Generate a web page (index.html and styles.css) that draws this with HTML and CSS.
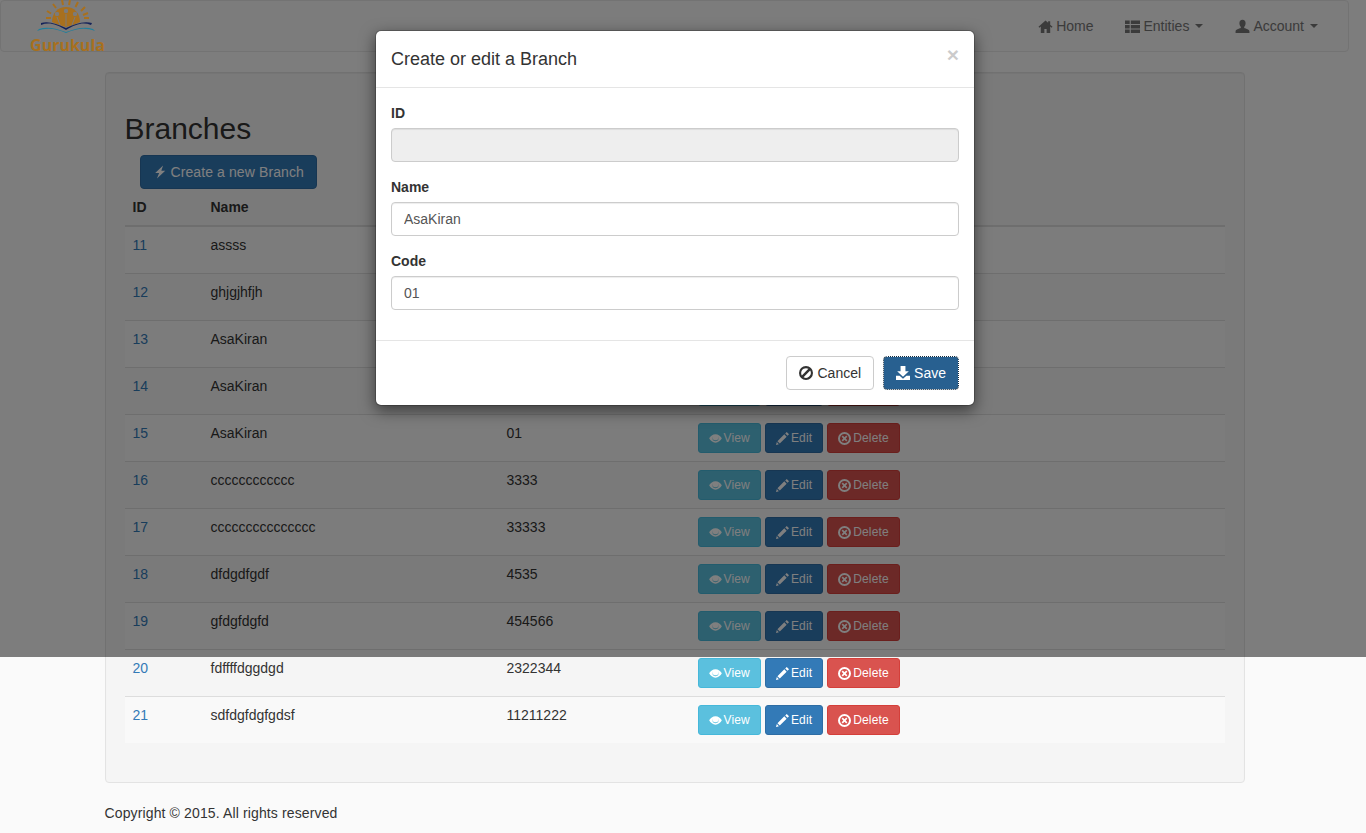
FILE: index.html
```html
<!doctype html>
<html lang="en">

<head>
    <meta charset="utf-8">
    <meta name="viewport" content="width=device-width, initial-scale=1">
    <title>Gurukula - Branches</title>
    <link rel="stylesheet" href="styles.css">
</head>

<body>
<!-- icon set -->
<svg class="icon-defs" aria-hidden="true">
    <symbol id="i-home" viewBox="0 0 16 16"><path d="M8 1.5 .5 8.3l1 1L3 8v6.8h3.8v-4.2h2.4v4.2H13V8l1.500 1.300 1-1L13 6V2.300h-2.200v1.700z"/></symbol>
    <symbol id="i-list" viewBox="0 0 16 16"><path d="M0 1.500h5v3.700H0zM6.200 1.500H16v3.700H6.200zM0 6.300h5V10H0zM6.200 6.300H16V10H6.200zM0 11.100h5v3.700H0zM6.200 11.100H16v3.700H6.200z"/></symbol>
    <symbol id="i-user" viewBox="0 0 16 16"><path d="M8 .8C5.800.8 4.700 2.400 4.700 4.500c0 1.600.6 3 1.500 3.800v1.400C4 10.500.6 11.200.6 13.300v1.700h14.800v-1.700c0-2.100-3.400-2.800-5.600-3.600V8.300c.9-.8 1.500-2.200 1.500-3.800C11.300 2.400 10.200.8 8 .8z"/></symbol>
    <symbol id="i-flash" viewBox="0 .5 16 15"><path d="M11.500.5 2.500 9H7l-2.500 6.500L14 6.500H9.500z"/></symbol>
    <symbol id="i-eye" viewBox="0 2 16 12"><path fill-rule="evenodd" d="M8 2.800C4.600 2.800 1.800 5 .2 7.800c1.600 3 4.400 5.400 7.800 5.400s6.200-2.400 7.800-5.400C14.200 5 11.400 2.800 8 2.800zM4.400 5.200a4 4 0 0 0-.2 3.400c.7 1.700 2.200 2.800 3.800 2.800s3.200-1.100 3.800-2.800a4 4 0 0 0-.2-3.400 3.600 3.600 0 0 1-.2 3.300C10.700 9.400 9.400 10 8 10s-2.700-.6-3.400-1.500a3.600 3.600 0 0 1-.2-3.300z"/></symbol>
    <symbol id="i-pencil" viewBox="0.800 0.800 14.400 14.400"><path d="M12.700.8 15.200 3.300 13.600 5 11 2.400zM10 3.400l2.600 2.600L5 13.600 2.400 11zM1.700 12l2.300 2.300-3.200 1z"/></symbol>
    <symbol id="i-remove" viewBox="0.800 0.800 14.400 14.400"><path fill-rule="evenodd" d="M8 .8a7.200 7.200 0 1 0 0 14.400A7.200 7.200 0 0 0 8 .8zm0 2.200a5 5 0 1 1 0 10A5 5 0 0 1 8 3z"/><path d="M6.100 4.800 8 6.700l1.900-1.900 1.300 1.300L9.300 8l1.900 1.900-1.300 1.300L8 9.300l-1.900 1.900-1.300-1.300L6.700 8 4.800 6.100z"/></symbol>
    <symbol id="i-ban" viewBox="0.800 0.800 14.400 14.400"><path fill-rule="evenodd" d="M8 .8a7.200 7.200 0 1 0 0 14.400A7.200 7.200 0 0 0 8 .8zm0 2.200c.9 0 1.800.3 2.500.7L3.700 10.500A5 5 0 0 1 8 3zm4.300 2.500a5 5 0 0 1-6.800 6.800z"/></symbol>
    <symbol id="i-save" viewBox="0.800 1 14.400 14.400"><path d="M5.500 1h5v5.500h3.500L8 12 2 6.500h3.500zM.8 11h3.700L8 14l3.500-3h3.700v4.300H.8z"/></symbol>
</svg>

<nav class="navbar">
    <a class="logo" href="#">
        <svg class="logo-mark" viewBox="0 0 74 34" aria-hidden="true">
            <path class="logo-sun" d="M21 22c0-9 6-15 14-15s14 6 14 15l-7 3-7 2-7-2z"/>
            <circle class="logo-cut" cx="26" cy="14" r="2.200"/>
            <circle class="logo-cut" cx="35" cy="11" r="2.200"/>
            <circle class="logo-cut" cx="44" cy="14" r="2.200"/>
            <path class="logo-line" d="M26 17l3 8M35 14v12M44 17l-3 8"/>
            <path class="logo-ray" d="M15 18h5M16 11l4 2.500M22 4l3 4M31 0l1 5M39 0l-1 5M47 2l-2.500 5M54 7l-4 4M57 13l-5 2M58 18h-5"/>
            <path class="logo-navy" d="M10 25c8-3 15-1 25 5 10-6 17-8 25-5l1-2c-9-2-17 1-26 5-9-4-17-7-25-5z"/>
            <path class="logo-teal" d="M6 31c10-4 20-2 29 2 9-4 19-6 29-2l-2-2c-9-3-18 0-27 3-9-3-18-6-27-3z"/>
        </svg>
        <span class="logo-text">Gurukula</span>
    </a>
    <ul class="nav">
        <li><a href="#"><svg class="icon"><use href="#i-home"/></svg>Home</a></li>
        <li><a href="#"><svg class="icon"><use href="#i-list"/></svg>Entities<span class="caret"></span></a></li>
        <li><a href="#"><svg class="icon"><use href="#i-user"/></svg>Account<span class="caret"></span></a></li>
    </ul>
</nav>

<div class="container">
    <div class="well">
        <h2>Branches</h2>
        <button class="btn btn-primary btn-create"><svg class="icon"><use href="#i-flash"/></svg>Create a new Branch</button>
        <table class="table">
            <colgroup>
                <col class="col-id">
                <col class="col-name">
                <col class="col-code">
                <col>
            </colgroup>
            <thead>
                <tr><th>ID</th><th>Name</th><th>Code</th><th></th></tr>
            </thead>
            <tbody>
                <tr>
                    <td><a href="#">11</a></td><td>assss</td><td>1111</td>
                    <td><div class="actions">
                        <button class="btn btn-sm btn-info"><svg class="icon"><use href="#i-eye"/></svg>View</button>
                        <button class="btn btn-sm btn-primary"><svg class="icon"><use href="#i-pencil"/></svg>Edit</button>
                        <button class="btn btn-sm btn-danger"><svg class="icon"><use href="#i-remove"/></svg>Delete</button>
                    </div></td>
                </tr>
                <tr>
                    <td><a href="#">12</a></td><td>ghjgjhfjh</td><td>2222</td>
                    <td><div class="actions">
                        <button class="btn btn-sm btn-info"><svg class="icon"><use href="#i-eye"/></svg>View</button>
                        <button class="btn btn-sm btn-primary"><svg class="icon"><use href="#i-pencil"/></svg>Edit</button>
                        <button class="btn btn-sm btn-danger"><svg class="icon"><use href="#i-remove"/></svg>Delete</button>
                    </div></td>
                </tr>
                <tr>
                    <td><a href="#">13</a></td><td>AsaKiran</td><td>01</td>
                    <td><div class="actions">
                        <button class="btn btn-sm btn-info"><svg class="icon"><use href="#i-eye"/></svg>View</button>
                        <button class="btn btn-sm btn-primary"><svg class="icon"><use href="#i-pencil"/></svg>Edit</button>
                        <button class="btn btn-sm btn-danger"><svg class="icon"><use href="#i-remove"/></svg>Delete</button>
                    </div></td>
                </tr>
                <tr>
                    <td><a href="#">14</a></td><td>AsaKiran</td><td>01</td>
                    <td><div class="actions">
                        <button class="btn btn-sm btn-info"><svg class="icon"><use href="#i-eye"/></svg>View</button>
                        <button class="btn btn-sm btn-primary"><svg class="icon"><use href="#i-pencil"/></svg>Edit</button>
                        <button class="btn btn-sm btn-danger"><svg class="icon"><use href="#i-remove"/></svg>Delete</button>
                    </div></td>
                </tr>
                <tr>
                    <td><a href="#">15</a></td><td>AsaKiran</td><td>01</td>
                    <td><div class="actions">
                        <button class="btn btn-sm btn-info"><svg class="icon"><use href="#i-eye"/></svg>View</button>
                        <button class="btn btn-sm btn-primary"><svg class="icon"><use href="#i-pencil"/></svg>Edit</button>
                        <button class="btn btn-sm btn-danger"><svg class="icon"><use href="#i-remove"/></svg>Delete</button>
                    </div></td>
                </tr>
                <tr>
                    <td><a href="#">16</a></td><td>cccccccccccc</td><td>3333</td>
                    <td><div class="actions">
                        <button class="btn btn-sm btn-info"><svg class="icon"><use href="#i-eye"/></svg>View</button>
                        <button class="btn btn-sm btn-primary"><svg class="icon"><use href="#i-pencil"/></svg>Edit</button>
                        <button class="btn btn-sm btn-danger"><svg class="icon"><use href="#i-remove"/></svg>Delete</button>
                    </div></td>
                </tr>
                <tr>
                    <td><a href="#">17</a></td><td>ccccccccccccccc</td><td>33333</td>
                    <td><div class="actions">
                        <button class="btn btn-sm btn-info"><svg class="icon"><use href="#i-eye"/></svg>View</button>
                        <button class="btn btn-sm btn-primary"><svg class="icon"><use href="#i-pencil"/></svg>Edit</button>
                        <button class="btn btn-sm btn-danger"><svg class="icon"><use href="#i-remove"/></svg>Delete</button>
                    </div></td>
                </tr>
                <tr>
                    <td><a href="#">18</a></td><td>dfdgdfgdf</td><td>4535</td>
                    <td><div class="actions">
                        <button class="btn btn-sm btn-info"><svg class="icon"><use href="#i-eye"/></svg>View</button>
                        <button class="btn btn-sm btn-primary"><svg class="icon"><use href="#i-pencil"/></svg>Edit</button>
                        <button class="btn btn-sm btn-danger"><svg class="icon"><use href="#i-remove"/></svg>Delete</button>
                    </div></td>
                </tr>
                <tr>
                    <td><a href="#">19</a></td><td>gfdgfdgfd</td><td>454566</td>
                    <td><div class="actions">
                        <button class="btn btn-sm btn-info"><svg class="icon"><use href="#i-eye"/></svg>View</button>
                        <button class="btn btn-sm btn-primary"><svg class="icon"><use href="#i-pencil"/></svg>Edit</button>
                        <button class="btn btn-sm btn-danger"><svg class="icon"><use href="#i-remove"/></svg>Delete</button>
                    </div></td>
                </tr>
                <tr>
                    <td><a href="#">20</a></td><td>fdffffdggdgd</td><td>2322344</td>
                    <td><div class="actions">
                        <button class="btn btn-sm btn-info"><svg class="icon"><use href="#i-eye"/></svg>View</button>
                        <button class="btn btn-sm btn-primary"><svg class="icon"><use href="#i-pencil"/></svg>Edit</button>
                        <button class="btn btn-sm btn-danger"><svg class="icon"><use href="#i-remove"/></svg>Delete</button>
                    </div></td>
                </tr>
                <tr>
                    <td><a href="#">21</a></td><td>sdfdgfdgfgdsf</td><td>11211222</td>
                    <td><div class="actions">
                        <button class="btn btn-sm btn-info"><svg class="icon"><use href="#i-eye"/></svg>View</button>
                        <button class="btn btn-sm btn-primary"><svg class="icon"><use href="#i-pencil"/></svg>Edit</button>
                        <button class="btn btn-sm btn-danger"><svg class="icon"><use href="#i-remove"/></svg>Delete</button>
                    </div></td>
                </tr>
            </tbody>
        </table>
    </div>
    <p class="footer">Copyright &copy; 2015. All rights reserved</p>
</div>

<!-- modal over the page -->
<div class="modal-backdrop"></div>
<div class="modal">
    <div class="modal-header">
        <h4>Create or edit a Branch</h4>
        <span class="close">&times;</span>
    </div>
    <div class="modal-body">
        <div class="form-group">
            <label for="branch-id">ID</label>
            <input id="branch-id" class="form-control" disabled>
        </div>
        <div class="form-group">
            <label for="branch-name">Name</label>
            <input id="branch-name" class="form-control" value="AsaKiran">
        </div>
        <div class="form-group">
            <label for="branch-code">Code</label>
            <input id="branch-code" class="form-control" value="01">
        </div>
    </div>
    <div class="modal-footer">
        <button class="btn btn-default"><svg class="icon"><use href="#i-ban"/></svg>Cancel</button>
        <button class="btn btn-save"><svg class="icon"><use href="#i-save"/></svg>Save</button>
    </div>
</div>
</body>

</html>
```

FILE: styles.css
```css
* {
    box-sizing: border-box;
}

body {
    margin: 0;
    padding-right: 17px;
    background-color: #fafafa;
    color: #333;
    font-family: "Liberation Sans", Arial, sans-serif;
    font-size: 14px;
    line-height: 20px;
}

a {
    color: #337ab7;
    text-decoration: none;
}

.icon-defs {
    display: none;
}

.icon {
    width: 1em;
    height: 1em;
    flex: none;
    fill: currentColor;
}

/* navbar */
.navbar {
    display: flex;
    justify-content: space-between;
    height: 52px;
    margin-bottom: 20px;
    padding: 0 15px 0 29px;
    background-color: #f8f8f8;
    border: 1px solid #e7e7e7;
    border-radius: 4px;
}

.logo {
    /* logo sits above the backdrop, it keeps its colour in the reference */
    position: relative;
    z-index: 15;
    display: flex;
    flex-direction: column;
    align-items: center;
    width: 75px;
    height: 54px;
    margin-top: -1px;
}

.logo-mark {
    display: block;
    width: 74px;
    height: 34px;
    flex: none;
}

.logo-sun {
    fill: #a8701e;
}

.logo-cut {
    fill: #7b7b7b;
}

.logo-line {
    fill: none;
    stroke: #7b7b7b;
    stroke-width: 1;
}

.logo-ray {
    fill: none;
    stroke: #a8701e;
    stroke-width: 2;
}

.logo-navy {
    fill: #14235a;
}

.logo-teal {
    fill: #1f7f9c;
}

.logo-text {
    margin-top: 2px;
    color: #a8701e;
    font-family: "Open Sans", sans-serif;
    font-size: 16px;
    font-weight: 700;
    line-height: 18px;
}

.nav {
    display: flex;
    gap: 2px;
    margin: 0;
    padding: 0;
    list-style: none;
}

.nav a {
    display: flex;
    align-items: center;
    gap: 3px;
    height: 50px;
    padding: 0 15px;
    color: #777;
}

.nav .icon {
    width: 15px;
    height: 15px;
}

.caret {
    width: 0;
    height: 0;
    margin-left: 3px;
    border-top: 4px solid #777;
    border-left: 4px solid transparent;
    border-right: 4px solid transparent;
}

/* page */
.container {
    width: 1170px;
    margin: 0 auto;
    padding: 0 15px;
}

.well {
    margin-bottom: 20px;
    padding: 19px;
    background-color: #f5f5f5;
    border: 1px solid #e3e3e3;
    border-radius: 4px;
    box-shadow: inset 0 1px 1px rgba(0, 0, 0, .05);
}

h2 {
    margin: 20px 0 10px;
    font-size: 30px;
    font-weight: 500;
    line-height: 33px;
}

.footer {
    margin: 0 0 10px;
    letter-spacing: .13px;
}

/* buttons */
.btn {
    display: inline-flex;
    align-items: center;
    gap: 4px;
    height: 34px;
    padding: 6px 12px;
    border: 1px solid transparent;
    border-radius: 4px;
    font-family: inherit;
    font-size: 14px;
    line-height: 20px;
}

.btn-sm {
    gap: 2px;
    height: 30px;
    padding: 5px 10px;
    font-size: 12px;
    line-height: 18px;
    letter-spacing: .15px;
    border-radius: 3px;
}

.btn-sm .icon {
    width: 13px;
    height: 13px;
}

.btn-default {
    color: #333;
    background-color: #fff;
    border-color: #ccc;
}

.btn-primary {
    color: #fff;
    background-color: #337ab7;
    border-color: #2e6da4;
}

.btn-info {
    color: #fff;
    background-color: #5bc0de;
    border-color: #46b8da;
}

.btn-danger {
    color: #fff;
    background-color: #d9534f;
    border-color: #d43f3a;
}

.btn-create {
    margin-left: 15px;
    vertical-align: top;
    letter-spacing: .1px;
}

.btn-create .icon {
    height: 16px;
}

/* save has the focus in the reference */
.btn-save {
    color: #fff;
    background-color: #286090;
    border-color: #122b40;
    outline: 1px dotted #fff;
    outline-offset: -1px;
}

/* table */
.table {
    width: 100%;
    margin-bottom: 20px;
    table-layout: fixed;
    border-collapse: collapse;
}

.col-id {
    width: 78px;
}

.col-name {
    width: 296px;
}

.col-code {
    width: 191px;
}

.table th,
.table td {
    padding: 8px;
    text-align: left;
    vertical-align: top;
}

.table th {
    border-bottom: 2px solid #ddd;
}

.table td {
    border-top: 1px solid #ddd;
}

.table tbody tr:nth-child(odd) {
    background-color: #f9f9f9;
}

.actions {
    display: flex;
    gap: 4px;
}

/* modal */
.modal-backdrop {
    position: absolute;
    top: 0;
    left: 0;
    z-index: 10;
    width: 100%;
    height: 657px;
    background-color: #000;
    opacity: .5;
}

.modal {
    position: absolute;
    top: 30px;
    left: 375px;
    z-index: 20;
    width: 600px;
    background-color: #fff;
    border: 1px solid rgba(0, 0, 0, .2);
    border-radius: 6px;
    background-clip: padding-box;
    box-shadow: 0 5px 15px rgba(0, 0, 0, .5);
}

.modal-header {
    display: flex;
    justify-content: space-between;
    padding: 15px;
    border-bottom: 1px solid #e5e5e5;
}

.modal-header h4 {
    margin: 0;
    font-size: 18px;
    font-weight: 500;
    line-height: 26px;
}

.close {
    margin-top: -2px;
    color: #000;
    font-size: 21px;
    font-weight: 700;
    line-height: 21px;
    opacity: .2;
}

.modal-body {
    padding: 15px;
}

.form-group {
    margin-bottom: 15px;
}

.form-group label {
    display: block;
    margin-bottom: 5px;
    font-weight: 700;
}

.form-control {
    display: block;
    width: 100%;
    height: 34px;
    padding: 6px 12px;
    color: #555;
    background-color: #fff;
    border: 1px solid #ccc;
    border-radius: 4px;
    box-shadow: inset 0 1px 1px rgba(0, 0, 0, .075);
    font-family: inherit;
    font-size: 14px;
}

.form-control:disabled {
    background-color: #eee;
}

.modal-footer {
    display: flex;
    justify-content: flex-end;
    gap: 9px;
    padding: 15px;
    border-top: 1px solid #e5e5e5;
}
```
